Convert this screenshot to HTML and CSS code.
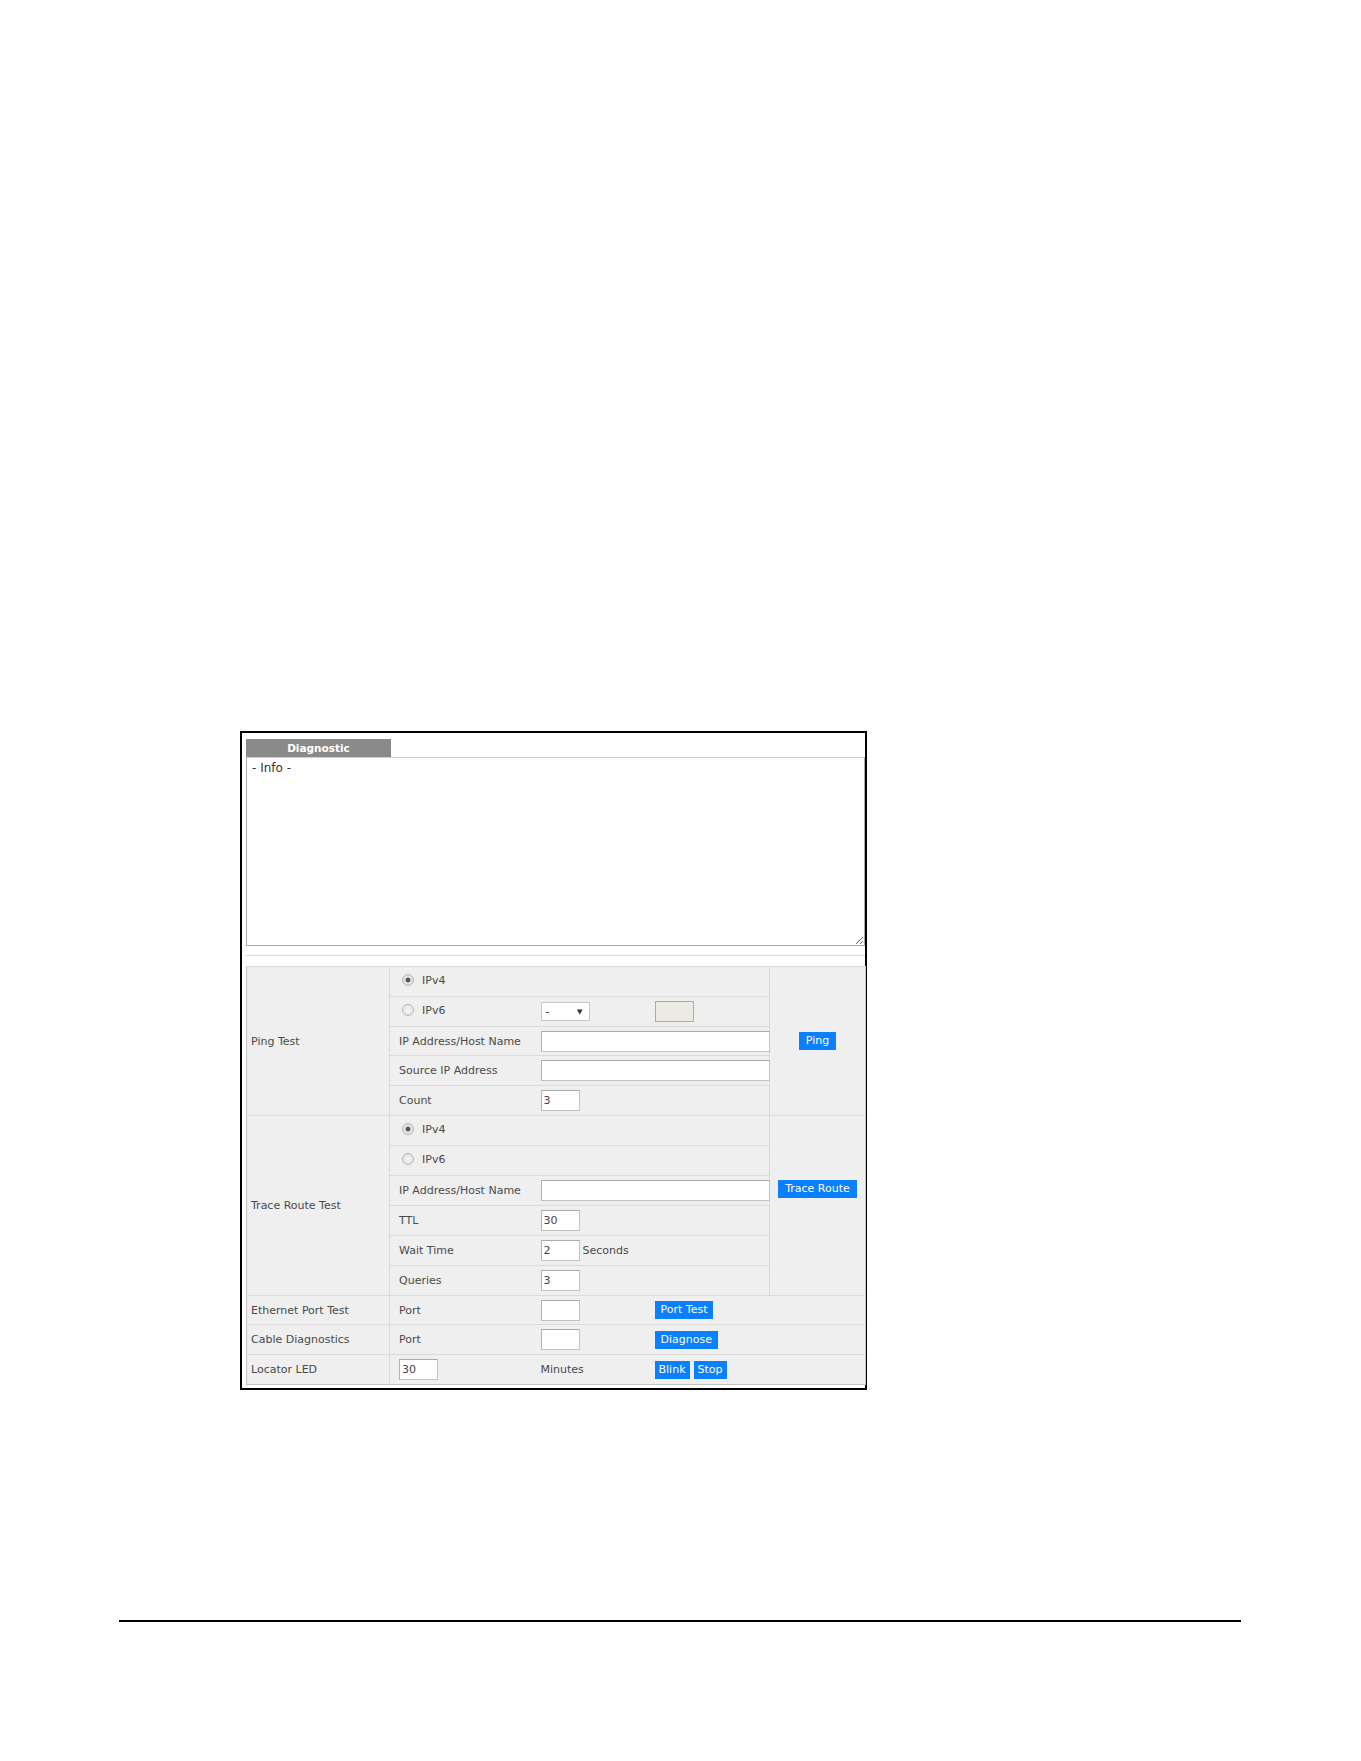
FILE: index.html
```html
<!DOCTYPE html>
<html lang="en">
<head>
    <meta charset="UTF-8">
    <meta name="viewport" content="width=device-width, initial-scale=1.0">
    <title>Diagnostic</title>
    <link rel="stylesheet" href="styles.css">
</head>
<body>
    <div class="page">
        <div class="panel">
            <div class="tab">Diagnostic</div>
            <textarea class="info" readonly>- Info -</textarea>
            <div class="divider"></div>

            <table class="diag">
                <colgroup>
                    <col class="c-group">
                    <col class="c-label">
                    <col class="c-field">
                    <col class="c-extra">
                    <col class="c-action">
                </colgroup>

                <!-- Ping -->
                <tr>
                    <td class="group" rowspan="5">Ping Test</td>
                    <td class="label" colspan="3"><label><input type="radio" name="ping-ip" checked>IPv4</label></td>
                    <td class="action" rowspan="5"><button type="button" class="btn">Ping</button></td>
                </tr>
                <tr>
                    <td class="label"><label><input type="radio" name="ping-ip">IPv6</label></td>
                    <td class="field"><div class="select-box"><span>-</span><span class="arrow">&#9660;</span></div></td>
                    <td class="field"><div class="disabled-box"></div></td>
                </tr>
                <tr class="tight">
                    <td class="label">IP Address/Host Name</td>
                    <td class="field" colspan="2"><input type="text" class="txt wide"></td>
                </tr>
                <tr>
                    <td class="label">Source IP Address</td>
                    <td class="field" colspan="2"><input type="text" class="txt wide"></td>
                </tr>
                <tr>
                    <td class="label">Count</td>
                    <td class="field" colspan="2"><input type="text" class="txt small" value="3"></td>
                </tr>

                <!-- Trace route -->
                <tr>
                    <td class="group" rowspan="6">Trace Route Test</td>
                    <td class="label" colspan="3"><label><input type="radio" name="trace-ip" checked>IPv4</label></td>
                    <td class="action action-top" rowspan="6"><button type="button" class="btn">Trace Route</button></td>
                </tr>
                <tr>
                    <td class="label" colspan="3"><label><input type="radio" name="trace-ip">IPv6</label></td>
                </tr>
                <tr>
                    <td class="label">IP Address/Host Name</td>
                    <td class="field" colspan="2"><input type="text" class="txt wide"></td>
                </tr>
                <tr>
                    <td class="label">TTL</td>
                    <td class="field" colspan="2"><input type="text" class="txt small" value="30"></td>
                </tr>
                <tr>
                    <td class="label">Wait Time</td>
                    <td class="field" colspan="2"><input type="text" class="txt small" value="2"><span class="unit">Seconds</span></td>
                </tr>
                <tr>
                    <td class="label">Queries</td>
                    <td class="field" colspan="2"><input type="text" class="txt small" value="3"></td>
                </tr>

                <!-- Single line tests -->
                <tr class="tight">
                    <td class="group">Ethernet Port Test</td>
                    <td class="label">Port</td>
                    <td class="field"><input type="text" class="txt small"></td>
                    <td class="field" colspan="2"><button type="button" class="btn">Port Test</button></td>
                </tr>
                <tr>
                    <td class="group">Cable Diagnostics</td>
                    <td class="label">Port</td>
                    <td class="field"><input type="text" class="txt small"></td>
                    <td class="field" colspan="2"><button type="button" class="btn">Diagnose</button></td>
                </tr>
                <tr>
                    <td class="group">Locator LED</td>
                    <td class="label"><input type="text" class="txt small" value="30"></td>
                    <td class="field">Minutes</td>
                    <td class="field" colspan="2"><button type="button" class="btn compact">Blink</button><button type="button" class="btn compact">Stop</button></td>
                </tr>
            </table>
        </div>

        <div class="footer-rule"></div>
        <div class="bottom-rule"></div>
    </div>
</body>
</html>
```

FILE: styles.css
```css
html, body {
    margin: 0;
    background-color: #fff;
}

body {
    font-family: "DejaVu Sans", Verdana, sans-serif;
    font-size: 11px;
    color: #4a4a4a;
}

.page {
    height: 1761px;
    overflow: hidden;
}

.panel {
    width: 619px;
    margin: 731px 0 0 240px;
    padding: 6px 0 3px 4px;
    border: 2px solid #000;
}

.tab {
    width: 145px;
    height: 18px;
    line-height: 18px;
    background-color: #8a8a8a;
    color: #fff;
    font-size: 10.5px;
    font-weight: bold;
    text-align: center;
}

.info {
    display: block;
    width: 619px;
    height: 189px;
    margin: 0;
    padding: 3px 5px;
    box-sizing: border-box;
    border: 1px solid #ababab;
    border-top-color: #cfcfcf;
    font-family: "DejaVu Sans", Verdana, sans-serif;
    font-size: 12px;
    color: #333;
    outline: none;
}

.divider {
    height: 1px;
    margin: 9px 0 10px;
    background-color: #dcdcdc;
}

.diag {
    width: 619px;
    table-layout: fixed;
    border-collapse: collapse;
    background-color: #efefef;
    border: 1px solid #c4c4c4;
}

.c-group { width: 143px; }
.c-label { width: 148px; }
.c-field { width: 114px; }
.c-extra { width: 118px; }
.c-action { width: 96px; }

.diag td {
    height: 29px;
    padding: 0;
    border-top: 1px solid #dadada;
    vertical-align: middle;
    white-space: nowrap;
}

.diag .tight td {
    height: 28px;
}

.diag .group {
    padding-left: 4px;
    border-right: 1px solid #dadada;
}

.diag .label {
    padding-left: 9px;
}

.diag .field {
    padding-left: 3px;
}

.diag .action {
    text-align: center;
    border-left: 1px solid #dadada;
}

.diag .action-top {
    vertical-align: top;
    padding-top: 64px;
}

label {
    display: inline-flex;
    align-items: center;
}

input[type="radio"] {
    appearance: none;
    width: 12px;
    height: 12px;
    margin: 0 8px 0 3px;
    border: 1px solid #b8b8b8;
    border-radius: 50%;
    background: radial-gradient(circle, #f4f4f4 0, #dedede 100%);
}

input[type="radio"]:checked {
    background: radial-gradient(circle, #555 0, #555 2px, #e4e4e4 2.8px, #dcdcdc 100%);
}

.txt {
    height: 21px;
    margin: 0;
    padding: 0 2px;
    box-sizing: border-box;
    border: 1px solid #c2c2c2;
    border-top-color: #aaa;
    border-left-color: #b4b4b4;
    background-color: #fff;
    font-family: "DejaVu Sans", Verdana, sans-serif;
    font-size: 11px;
    color: #444;
    vertical-align: middle;
    outline: none;
}

.txt.wide {
    width: 229px;
}

.txt.small {
    width: 39px;
}

.unit {
    margin-left: 3px;
    vertical-align: middle;
}

.select-box {
    width: 49px;
    height: 19px;
    box-sizing: border-box;
    display: flex;
    justify-content: space-between;
    align-items: center;
    padding: 0 6px 0 4px;
    border: 1px solid #c8c8c8;
    background-color: #fff;
    color: #333;
}

.select-box .arrow {
    font-size: 7px;
}

.disabled-box {
    width: 39px;
    height: 21px;
    box-sizing: border-box;
    border: 1px solid #aaa;
    background-color: #ebebe4;
}

.btn {
    height: 18px;
    margin: 0 4px 0 0;
    padding: 0 6px;
    border: none;
    background-color: #0a80ff;
    color: #fff;
    font-family: "DejaVu Sans", Verdana, sans-serif;
    font-size: 11px;
    line-height: 18px;
    vertical-align: middle;
    cursor: pointer;
}

.btn.compact {
    padding: 0 4px;
}

.action .btn {
    margin: 0;
    padding: 0 7px;
}

.footer-rule {
    width: 1122px;
    height: 2px;
    margin: 230px 0 0 119px;
    background-color: #000;
}

.bottom-rule {
    width: 1202px;
    height: 1px;
    margin-top: 139px;
    background-color: #000;
}
```
